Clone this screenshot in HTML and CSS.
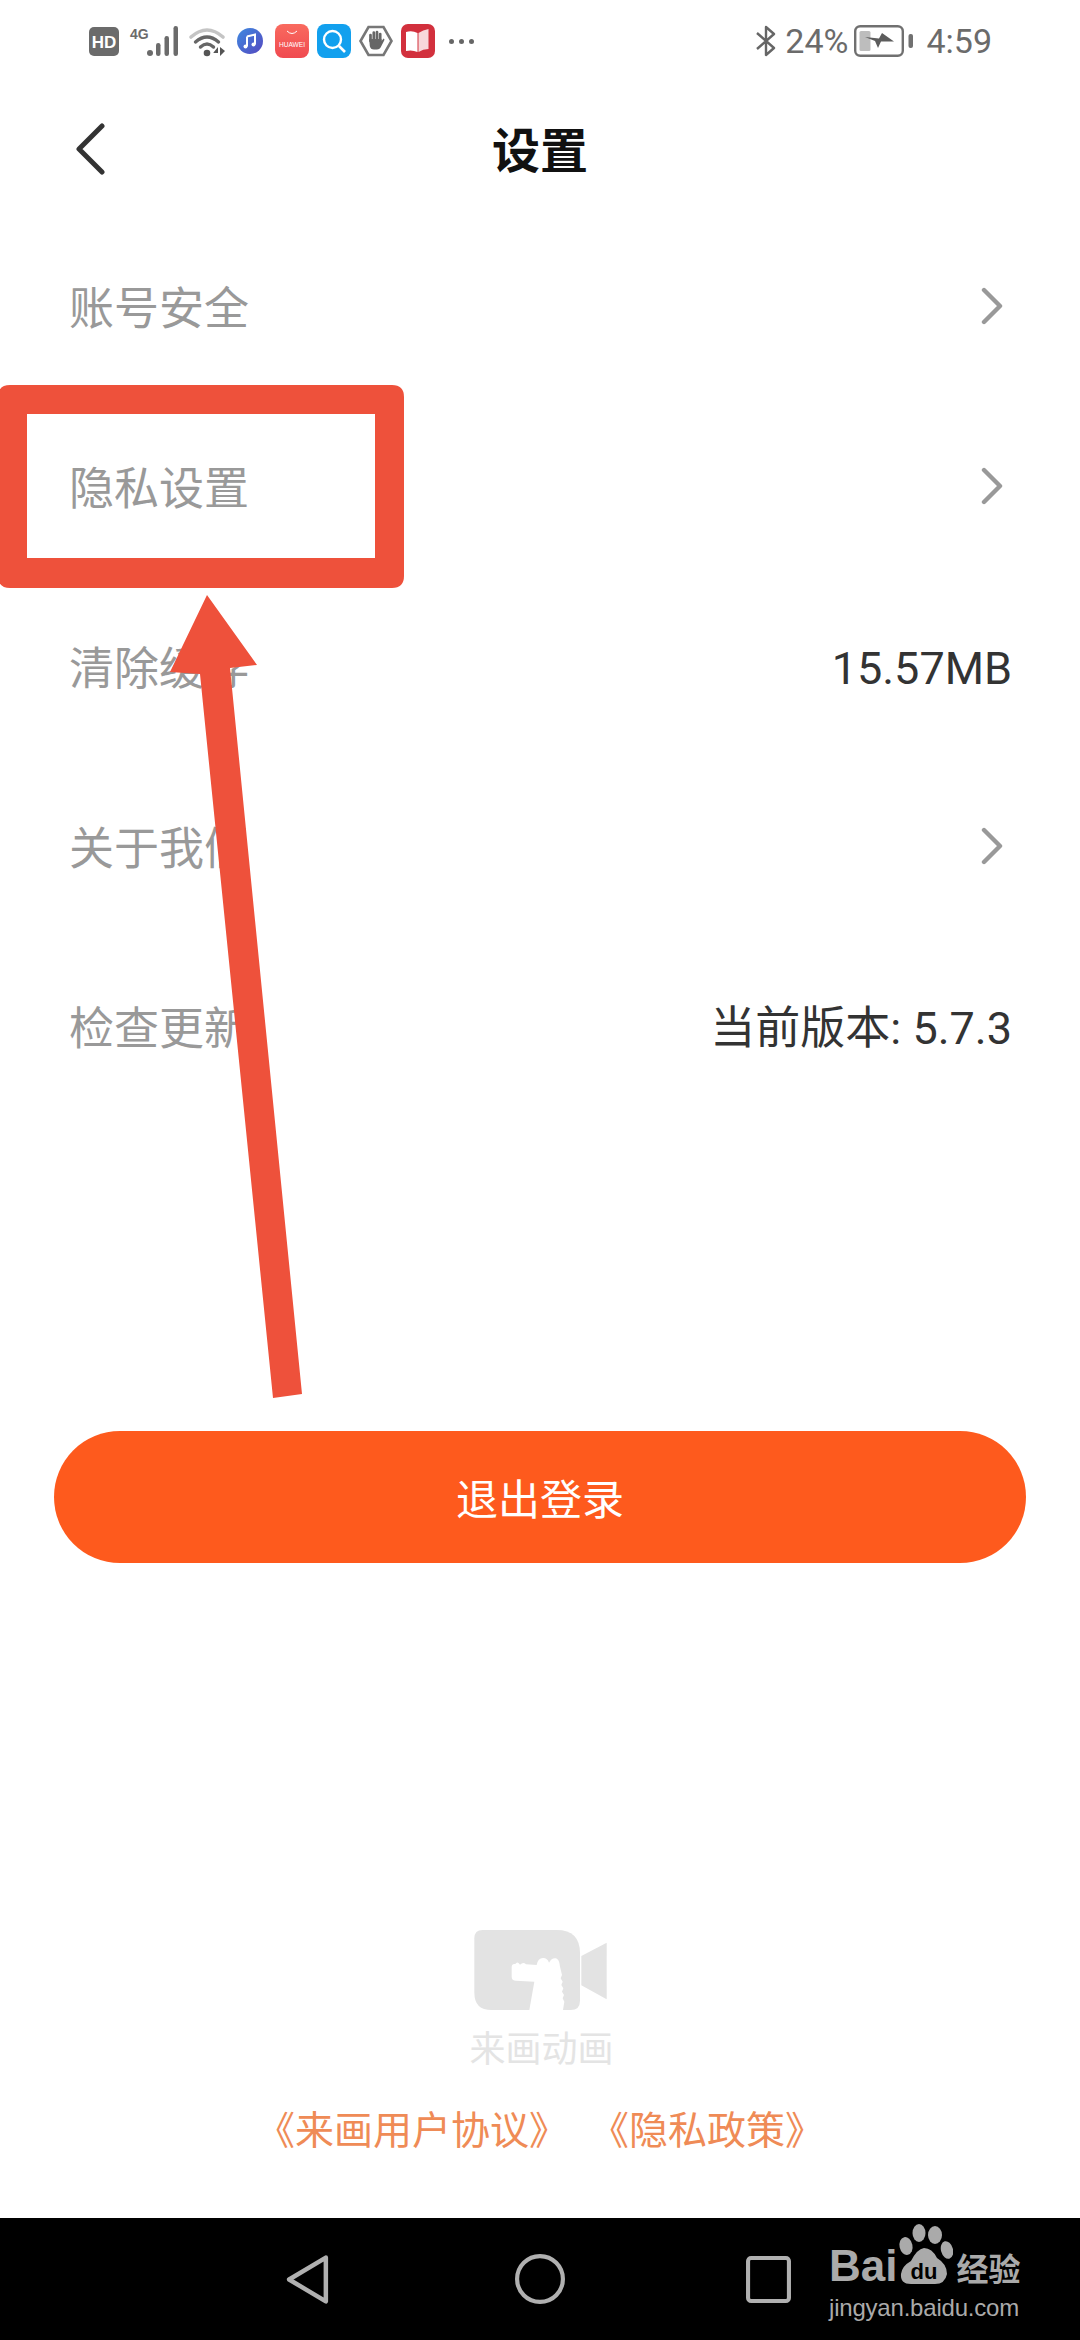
FILE: index.html
```html
<!DOCTYPE html>
<html lang="zh-CN">
<head>
<meta charset="utf-8">
<title>设置</title>
<link rel="stylesheet" href="styles.css">
</head>
<body>
<div class="page">
  <div class="status">
    <div class="status-left">
      <svg class="ic ic-hd" viewBox="0 0 30 29"><rect width="30" height="29" rx="5" fill="#6b6b6b"/><text x="15" y="21" class="t-hd">HD</text></svg>
      <svg class="ic ic-sig" viewBox="0 0 49 31"><text x="0" y="13" class="t-4g">4G</text><circle cx="20" cy="27" r="3" fill="#6b6b6b"/><rect x="26" y="17" width="4.5" height="13" rx="2.2" fill="#6b6b6b"/><rect x="34.5" y="10" width="4.5" height="20" rx="2.2" fill="#6b6b6b"/><rect x="43.5" y="0" width="4.5" height="30" rx="2.2" fill="#6b6b6b"/></svg>
      <svg class="ic ic-wifi" viewBox="0 0 38 31"><path d="M2 11Q18 -3 34 11" fill="none" stroke="#c4c4c4" stroke-width="3.6" stroke-linecap="round"/><path d="M6.5 16Q18 6 29.5 16" fill="none" stroke="#666" stroke-width="3.4" stroke-linecap="round"/><path d="M11.5 21Q18 15 24.5 21" fill="none" stroke="#666" stroke-width="3.4" stroke-linecap="round"/><circle cx="18" cy="27" r="3.3" fill="#555"/><path d="M29 30V21L24.5 26.5V27H29ZM31 21V30L36 25Z" fill="#555"/></svg>
      <svg class="ic ic-music" viewBox="0 0 26 26"><defs><linearGradient id="mg" x1="0" y1="0" x2="1" y2="1"><stop offset="0" stop-color="#3f8ae0"/><stop offset="1" stop-color="#5548c0"/></linearGradient></defs><circle cx="13" cy="13" r="13" fill="url(#mg)"/><path d="M10 8.5L18 6.5V16.5M10 8.5V18.5" fill="none" stroke="#fff" stroke-width="2"/><circle cx="8.5" cy="18.5" r="2" fill="#fff"/><circle cx="16.5" cy="16.5" r="2" fill="#fff"/></svg>
      <svg class="ic ic-app" viewBox="0 0 34 34"><defs><linearGradient id="hg" x1="0" y1="0" x2="0" y2="1"><stop offset="0" stop-color="#f96a5f"/><stop offset="1" stop-color="#f04a50"/></linearGradient></defs><rect width="34" height="34" rx="8" fill="url(#hg)"/><path d="M12 7Q17 12 22 7" fill="none" stroke="#fff" stroke-width="1"/><text x="17" y="23" class="t-hw">HUAWEI</text></svg>
      <svg class="ic ic-app" viewBox="0 0 34 34"><rect width="34" height="34" rx="8" fill="#12a0ee"/><circle cx="15.5" cy="15.5" r="8.5" fill="none" stroke="#fff" stroke-width="2.4"/><path d="M22 22L28 28" stroke="#fff" stroke-width="2.6"/></svg>
      <svg class="ic ic-app" viewBox="0 0 34 34"><path d="M9.5 3H24.5L32.5 17L24.5 31H9.5L1.5 17Z" fill="none" stroke="#777" stroke-width="2.6"/><path d="M11.5 17V11M14.8 17V8.5M18 17V8M21.2 17V10" stroke="#666" stroke-width="2.7" stroke-linecap="round"/><path d="M10.2 15H22.5V17L24.6 14.5Q26 15 25.2 16.6L21.6 23.5Q20.6 25.5 18 25.5H15Q11.5 25.5 10.8 22Z" fill="#666"/></svg>
      <svg class="ic ic-app" viewBox="0 0 34 34"><rect width="34" height="34" rx="7" fill="#d2303d"/><path d="M5 8Q11 6 16.5 9V28Q11 25.5 5 27Z" fill="#fff"/><path d="M17.5 9Q22 6 27.5 5V25Q22 25 17.5 28Z" fill="#f8d8da"/></svg>
      <div class="dots"><i></i><i></i><i></i></div>
    </div>
    <div class="status-right">
      <svg class="ic ic-bt" viewBox="0 0 20 32"><path d="M1 8L18 23L10 30V2L18 9L1 24" fill="none" stroke="#666" stroke-width="2.4" stroke-linejoin="round"/></svg>
      <span class="pct">24%</span>
      <svg class="ic ic-batt" viewBox="0 0 60 32"><rect x="1.2" y="1.2" width="47.6" height="29.6" rx="5" fill="none" stroke="#707070" stroke-width="2.4"/><rect x="5.5" y="6" width="11" height="20" rx="1.5" fill="#bdbdbd"/><path d="M11 12L25 13.5L28 8L40 16.5L27 16.5L24 23L21 16Z" fill="#5c5c5c"/><rect x="54.5" y="9" width="4.5" height="14" rx="2" fill="#707070"/></svg>
      <span class="clock">4:59</span>
    </div>
  </div>

  <header class="topbar">
    <svg class="back" viewBox="0 0 30 52"><path d="M26 3L3 26L26 49" fill="none" stroke="#333" stroke-width="5" stroke-linecap="round" stroke-linejoin="round"/></svg>
    <h1 class="title">设置</h1>
  </header>

  <ul class="list">
    <li class="row"><span class="label">账号安全</span><svg class="chev" viewBox="0 0 22 38"><path d="M3 3L19 19L3 35" fill="none" stroke="#999" stroke-width="4.4" stroke-linecap="round" stroke-linejoin="round"/></svg></li>
    <li class="row"><span class="label">隐私设置</span><svg class="chev" viewBox="0 0 22 38"><path d="M3 3L19 19L3 35" fill="none" stroke="#999" stroke-width="4.4" stroke-linecap="round" stroke-linejoin="round"/></svg></li>
    <li class="row"><span class="label">清除缓存</span><span class="value">15.57MB</span></li>
    <li class="row"><span class="label">关于我们</span><svg class="chev" viewBox="0 0 22 38"><path d="M3 3L19 19L3 35" fill="none" stroke="#999" stroke-width="4.4" stroke-linecap="round" stroke-linejoin="round"/></svg></li>
    <li class="row"><span class="label">检查更新</span><span class="value">当前版本: 5.7.3</span></li>
  </ul>

  <button class="logout">退出登录</button>

  <footer class="foot">
    <svg class="logo" viewBox="100 60 400 240"><path d="M128 60H350Q420 60 420 130V272Q420 300 392 300H155Q103 300 103 248V85Q103 60 128 60Z" fill="#e3e3e3"/><path d="M424 138L500 98V268L424 226Z" fill="#e3e3e3"/><path d="M215 170Q216 160 226 162Q232 152 240 164Q250 155 258 163L290 165Q294 143 310 144Q322 144 327 158Q336 142 348 145Q358 148 360 170L366 195L362 205L368 215L364 225L370 235L366 245L372 255L368 265L373 275L369 300H268L283 215L228 212Q215 212 215 200Z" fill="#fff"/></svg>
    <div class="brand">来画动画</div>
    <div class="links"><span>《来画用户协议》</span><span>《隐私政策》</span></div>
  </footer>

  <nav class="navbar">
    <svg class="nav-back" viewBox="0 0 43 50"><path d="M39 3.5L3 25L39 46.5Z" fill="none" stroke="#b0b0b0" stroke-width="4.4" stroke-linejoin="round"/></svg>
    <svg class="nav-home" viewBox="0 0 48 48"><circle cx="24" cy="24" r="22" fill="none" stroke="#b0b0b0" stroke-width="4"/></svg>
    <svg class="nav-recent" viewBox="0 0 44 46"><rect x="2" y="2" width="40" height="42" rx="3" fill="none" stroke="#b0b0b0" stroke-width="4"/></svg>
  </nav>

  <svg class="marks" viewBox="0 0 1080 2340">
    <path fill-rule="evenodd" d="M10 385H392Q404 385 404 397V576Q404 588 392 588H10Q-2 588 -2 576V397Q-2 385 10 385ZM27 414V558H375V414Z" fill="#ee513b"/>
    <path d="M207 595L257 665L230 668L302 1394L273 1398L200 674L170 672Z" fill="#ee513b"/>
  </svg>

  <div class="mark-baidu">
    <div class="bd-top">
      <span class="bd-bai">Bai</span>
      <svg class="bd-paw" viewBox="0 0 56 62"><ellipse cx="9" cy="22" rx="6.5" ry="9" fill="#aaa" transform="rotate(-12 9 22)"/><ellipse cx="22" cy="9" rx="6.5" ry="9" fill="#aaa"/><ellipse cx="38" cy="11" rx="7" ry="9" fill="#aaa"/><ellipse cx="50" cy="26" rx="6" ry="9" fill="#aaa" transform="rotate(-15 50 26)"/><path d="M27 24Q35 24 40 34Q50 40 50 50Q48 60 38 60H14Q3 60 4 50Q5 42 14 37Q20 25 27 24Z" fill="#aaa"/><text x="27" y="55" class="t-du">du</text></svg>
      <span class="bd-jy">经验</span>
    </div>
    <div class="bd-url">jingyan.baidu.com</div>
  </div>
</div>
</body>
</html>
```
FILE: styles.css
```css
* { box-sizing: border-box; }
html, body { margin: 0; padding: 0; background: #fff; }
body { font-family: Roboto, "Noto Sans CJK SC", sans-serif; }
.page { position: relative; width: 1080px; height: 2340px; overflow: hidden; display: flex; flex-direction: column; background: #fff; }

.status { height: 84px; flex: none; display: flex; justify-content: space-between; align-items: flex-start; padding: 24px 88px 0 89px; }
.status-left, .status-right { display: flex; align-items: center; height: 34px; color: #666; }
.ic { display: block; flex: none; overflow: visible; }
.ic-hd { width: 30px; height: 29px; margin-right: 11px; }
.ic-sig { width: 49px; height: 31px; margin-right: 10px; }
.ic-wifi { width: 38px; height: 31px; margin-right: 10px; }
.ic-music { width: 26px; height: 26px; margin-right: 12px; }
.ic-app { width: 34px; height: 34px; margin-right: 8px; }
.dots { display: flex; gap: 5px; margin-left: 6px; }
.dots i { display: block; width: 5px; height: 5px; border-radius: 50%; background: #666; }
.t-hd { font: 700 17px "Liberation Sans", sans-serif; fill: #fff; text-anchor: middle; }
.t-4g { font: 700 14px "Liberation Sans", sans-serif; fill: #6b6b6b; }
.t-hw { font: 400 6.6px "Liberation Sans", sans-serif; fill: #fff; text-anchor: middle; }
.ic-bt { width: 20px; height: 32px; margin-right: 9px; }
.pct, .clock { font: 400 34px/34px Roboto, sans-serif; color: #6b6b6b; }
.ic-batt { width: 60px; height: 32px; margin: 0 12px 0 6px; }

.topbar { height: 132px; flex: none; display: grid; grid-template-columns: 1fr auto 1fr; align-items: center; padding-bottom: 6px; }
.back { width: 30px; height: 52px; margin: 4px 0 0 76px; }
.title { margin: 0; font: 700 48px/1 "Noto Sans CJK SC", sans-serif; color: #111; }

.list { list-style: none; margin: 0; padding: 0 68px 0 69px; flex: none; }
.row { height: 180px; display: flex; align-items: center; justify-content: space-between; }
.label { font: 400 45px/1 "Noto Sans CJK SC", sans-serif; color: #999; margin-top: -2px; }
.value { font: 400 45px/1 Roboto, "Noto Sans CJK SC", sans-serif; color: #333; margin-top: 5px; }
.chev { width: 22px; height: 38px; margin-right: 9px; }

.logout { display: block; flex: none; margin: 315px 54px 0; width: 972px; height: 132px; border: 0; border-radius: 66px; background: #fe5a1d; color: #fff; font: 400 42px/1 "Noto Sans CJK SC", sans-serif; }

.foot { flex: none; margin-top: 367px; display: flex; flex-direction: column; align-items: center; }
.logo { display: block; width: 134px; height: 80px; }
.brand { margin: 16px 0 0 3px; font: 400 36px/40px "Noto Sans CJK SC", sans-serif; color: #e4e4e4; }
.links { margin-top: 33px; height: 56px; display: flex; gap: 22px; align-items: center; font: 400 39px/56px "Noto Sans CJK SC", sans-serif; color: #ef8b56; }

.navbar { flex: none; margin-top: auto; height: 122px; background: #000; display: flex; align-items: center; padding-left: 286px; }
.nav-back { width: 44px; height: 51px; }
.nav-home { width: 50px; height: 50px; margin-left: 185px; }
.nav-recent { width: 45px; height: 47px; margin-left: 181px; }

.marks { position: absolute; left: 0; top: 0; width: 1080px; height: 2340px; pointer-events: none; }

.mark-baidu { position: absolute; left: 829px; top: 2224px; width: 200px; color: #aaa; }
.bd-top { display: flex; align-items: flex-end; height: 62px; }
.bd-bai { font: 700 44px/40px "Liberation Sans", sans-serif; }
.bd-paw { width: 56px; height: 62px; }
.t-du { font: 700 22px "Liberation Sans", sans-serif; fill: #000; text-anchor: middle; }
.bd-jy { font: 700 32px/38px "Noto Sans CJK SC", sans-serif; margin-left: 3px; }
.bd-url { font: 400 24px/30px "Liberation Sans", sans-serif; margin-top: 7px; letter-spacing: -0.2px; }
```
